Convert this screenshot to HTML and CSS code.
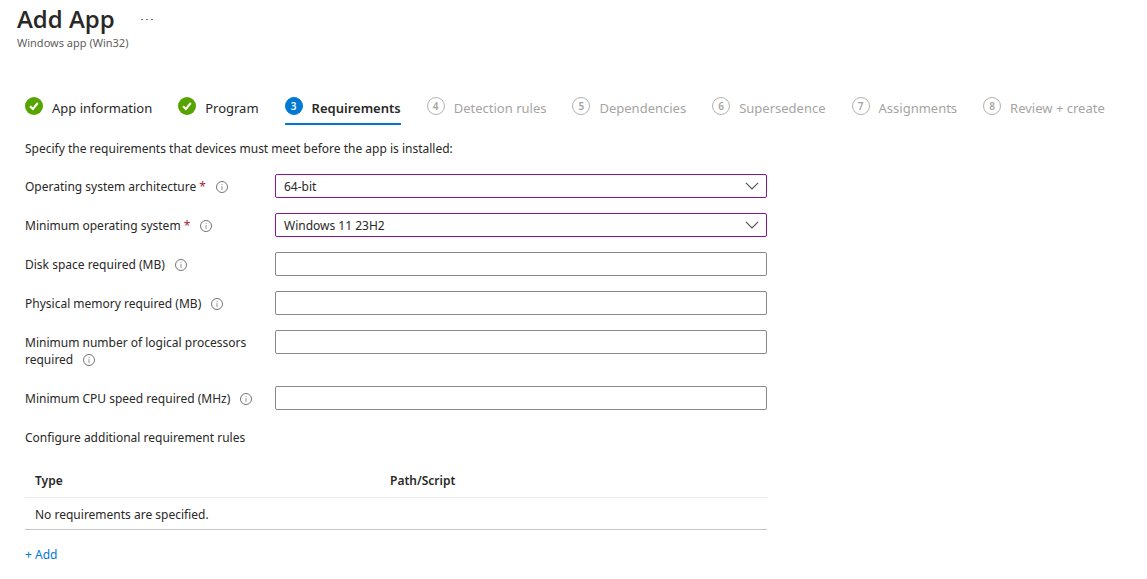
FILE: index.html
```html
<!DOCTYPE html>
<html lang="en">
<head>
<meta charset="utf-8">
<meta name="viewport" content="width=device-width, initial-scale=1">
<title>Add App</title>
<link rel="stylesheet" href="styles.css">
</head>
<body>
<svg class="symbols" aria-hidden="true">
  <symbol id="check" viewBox="0 0 18 18">
    <circle cx="9" cy="9" r="9" fill="#57a300"/>
    <path d="M5 9.2 7.9 12 12.8 6" fill="none" stroke="#fff" stroke-width="2"/>
  </symbol>
  <symbol id="info" viewBox="0 0 12 12">
    <circle cx="6" cy="6" r="5.5" fill="none" stroke="#757575"/>
    <path d="M6 5v4M6 3v1" fill="none" stroke="#959595"/>
  </symbol>
  <symbol id="chevron" viewBox="0 0 14 8">
    <path d="M.9.9 7 7 13.1.9" fill="none" stroke="#505050" stroke-width="1.1"/>
  </symbol>
</svg>
<header class="header">
  <div class="title-row">
    <h1 class="title">Add App</h1>
    <button class="more" type="button" aria-label="More actions">
      <svg class="dots" viewBox="0 0 12 2" aria-hidden="true"><path d="M0 1h2v1H0zM5 1h2v1H5zM10 1h2v1h-2z" fill="#777"/></svg>
    </button>
  </div>
  <p class="subtitle">Windows app (Win32)</p>
</header>
<main class="content">
  <nav class="steps" aria-label="Steps">
    <button class="step" type="button"><svg class="step-icon" aria-hidden="true"><use href="#check"/></svg><span>App information</span></button>
    <button class="step" type="button"><svg class="step-icon" aria-hidden="true"><use href="#check"/></svg><span>Program</span></button>
    <button class="step step-current" type="button" aria-current="step"><span class="step-icon number">3</span><span>Requirements</span></button>
    <button class="step step-pending" type="button"><span class="step-icon number">4</span><span>Detection rules</span></button>
    <button class="step step-pending" type="button"><span class="step-icon number">5</span><span>Dependencies</span></button>
    <button class="step step-pending" type="button"><span class="step-icon number">6</span><span>Supersedence</span></button>
    <button class="step step-pending" type="button"><span class="step-icon number">7</span><span>Assignments</span></button>
    <button class="step step-pending" type="button"><span class="step-icon number">8</span><span>Review + create</span></button>
  </nav>
  <p class="intro">Specify the requirements that devices must meet before the app is installed:</p>
  <form class="form">
    <div class="row">
      <label class="label" for="arch">Operating system architecture <span class="star">*</span><svg class="info" aria-hidden="true"><use href="#info"/></svg></label>
      <div class="select-box">
        <select class="field select" id="arch" required><option>64-bit</option></select>
        <svg class="chevron" aria-hidden="true"><use href="#chevron"/></svg>
      </div>
    </div>
    <div class="row">
      <label class="label" for="os">Minimum operating system <span class="star">*</span><svg class="info" aria-hidden="true"><use href="#info"/></svg></label>
      <div class="select-box">
        <select class="field select" id="os" required><option>Windows 11 23H2</option></select>
        <svg class="chevron" aria-hidden="true"><use href="#chevron"/></svg>
      </div>
    </div>
    <div class="row">
      <label class="label" for="disk">Disk space required (MB)<svg class="info" aria-hidden="true"><use href="#info"/></svg></label>
      <input class="field" id="disk" type="text">
    </div>
    <div class="row">
      <label class="label" for="memory">Physical memory required (MB)<svg class="info" aria-hidden="true"><use href="#info"/></svg></label>
      <input class="field" id="memory" type="text">
    </div>
    <div class="row">
      <label class="label" for="processors">Minimum number of logical processors required<svg class="info" aria-hidden="true"><use href="#info"/></svg></label>
      <input class="field" id="processors" type="text">
    </div>
    <div class="row">
      <label class="label" for="cpu">Minimum CPU speed required (MHz)<svg class="info" aria-hidden="true"><use href="#info"/></svg></label>
      <input class="field" id="cpu" type="text">
    </div>
    <p class="rules-title">Configure additional requirement rules</p>
    <table class="rules">
      <thead><tr><th>Type</th><th>Path/Script</th></tr></thead>
      <tbody><tr><td colspan="2">No requirements are specified.</td></tr></tbody>
    </table>
    <a class="add" href="#">+ Add</a>
  </form>
</main>
</body>
</html>
```

FILE: styles.css
```css
* {
  box-sizing: border-box;
}

body {
  margin: 0;
  background: #fff;
  color: #292827;
  font-family: "Noto Sans", "Segoe UI", sans-serif;
  font-size: 12px;
  line-height: 17px;
}

h1,
p {
  margin: 0;
}

button,
input,
select {
  font: inherit;
  color: inherit;
}

.symbols {
  position: absolute;
  width: 0;
  height: 0;
}

.header {
  padding: 3px 17px 0;
}

.title-row {
  display: flex;
  align-items: center;
  gap: 26px;
}

.title {
  font-family: "Open Sans", "Segoe UI", sans-serif;
  font-size: 24px;
  line-height: 31px;
  font-weight: 600;
}

.more {
  display: flex;
  padding: 0;
  border: 0;
  background: none;
}

.dots {
  width: 12px;
  height: 2px;
}

.subtitle {
  color: #605e5c;
  font-size: 11px;
}

.content {
  padding: 46px 25px 0;
}

.steps {
  display: flex;
  gap: 26px;
}

.step {
  display: flex;
  gap: 9px;
  padding: 0 0 4px;
  border: 0;
  border-bottom: 2px solid transparent;
  background: none;
  font-size: 13px;
  line-height: 22px;
  white-space: nowrap;
}

.step-icon {
  flex: none;
  width: 18px;
  height: 18px;
}

.number {
  border: 1px solid #b3b1af;
  border-radius: 50%;
  font-size: 10px;
  font-weight: 600;
  line-height: 16px;
  text-align: center;
}

.step-pending {
  color: #a6a4a2;
}

.step-current {
  border-color: #0078d4;
  font-weight: 600;
}

.step-current .number {
  border-color: #0078d4;
  background: #0078d4;
  color: #fff;
}

.intro {
  margin-top: 15px;
}

.form {
  display: flex;
  flex-direction: column;
  align-items: stretch;
  gap: 15px;
  max-width: 742px;
  margin-top: 17px;
}

.row {
  display: grid;
  grid-template-columns: 240px 1fr;
  gap: 10px;
  align-items: start;
}

.label {
  padding: 4px 0 3px;
}

.star {
  color: #a4262c;
}

.info {
  width: 12px;
  height: 12px;
  margin-left: 10px;
  vertical-align: -2px;
}

.field {
  display: block;
  width: 100%;
  height: 24px;
  padding: 0 8px;
  border: 1px solid #8a8886;
  border-radius: 2px;
  background: #fff;
}

.select-box {
  position: relative;
}

.select {
  appearance: none;
  border-color: #881798;
}

.chevron {
  position: absolute;
  top: 8px;
  right: 8px;
  width: 14px;
  height: 8px;
  pointer-events: none;
}

.rules-title {
  padding: 4px 0 3px;
}

.rules {
  width: 100%;
  border-collapse: collapse;
  table-layout: fixed;
  text-align: left;
}

.rules th {
  padding: 8px 10px;
  border-bottom: 1px solid #edebe9;
  font-weight: 600;
}

.rules th:first-child {
  width: 355px;
}

.rules td {
  padding: 8px 10px 6px;
  border-bottom: 1px solid #c8c6c4;
}

.add {
  align-self: flex-start;
  color: #0078d4;
  line-height: 19px;
  text-decoration: none;
}
```
